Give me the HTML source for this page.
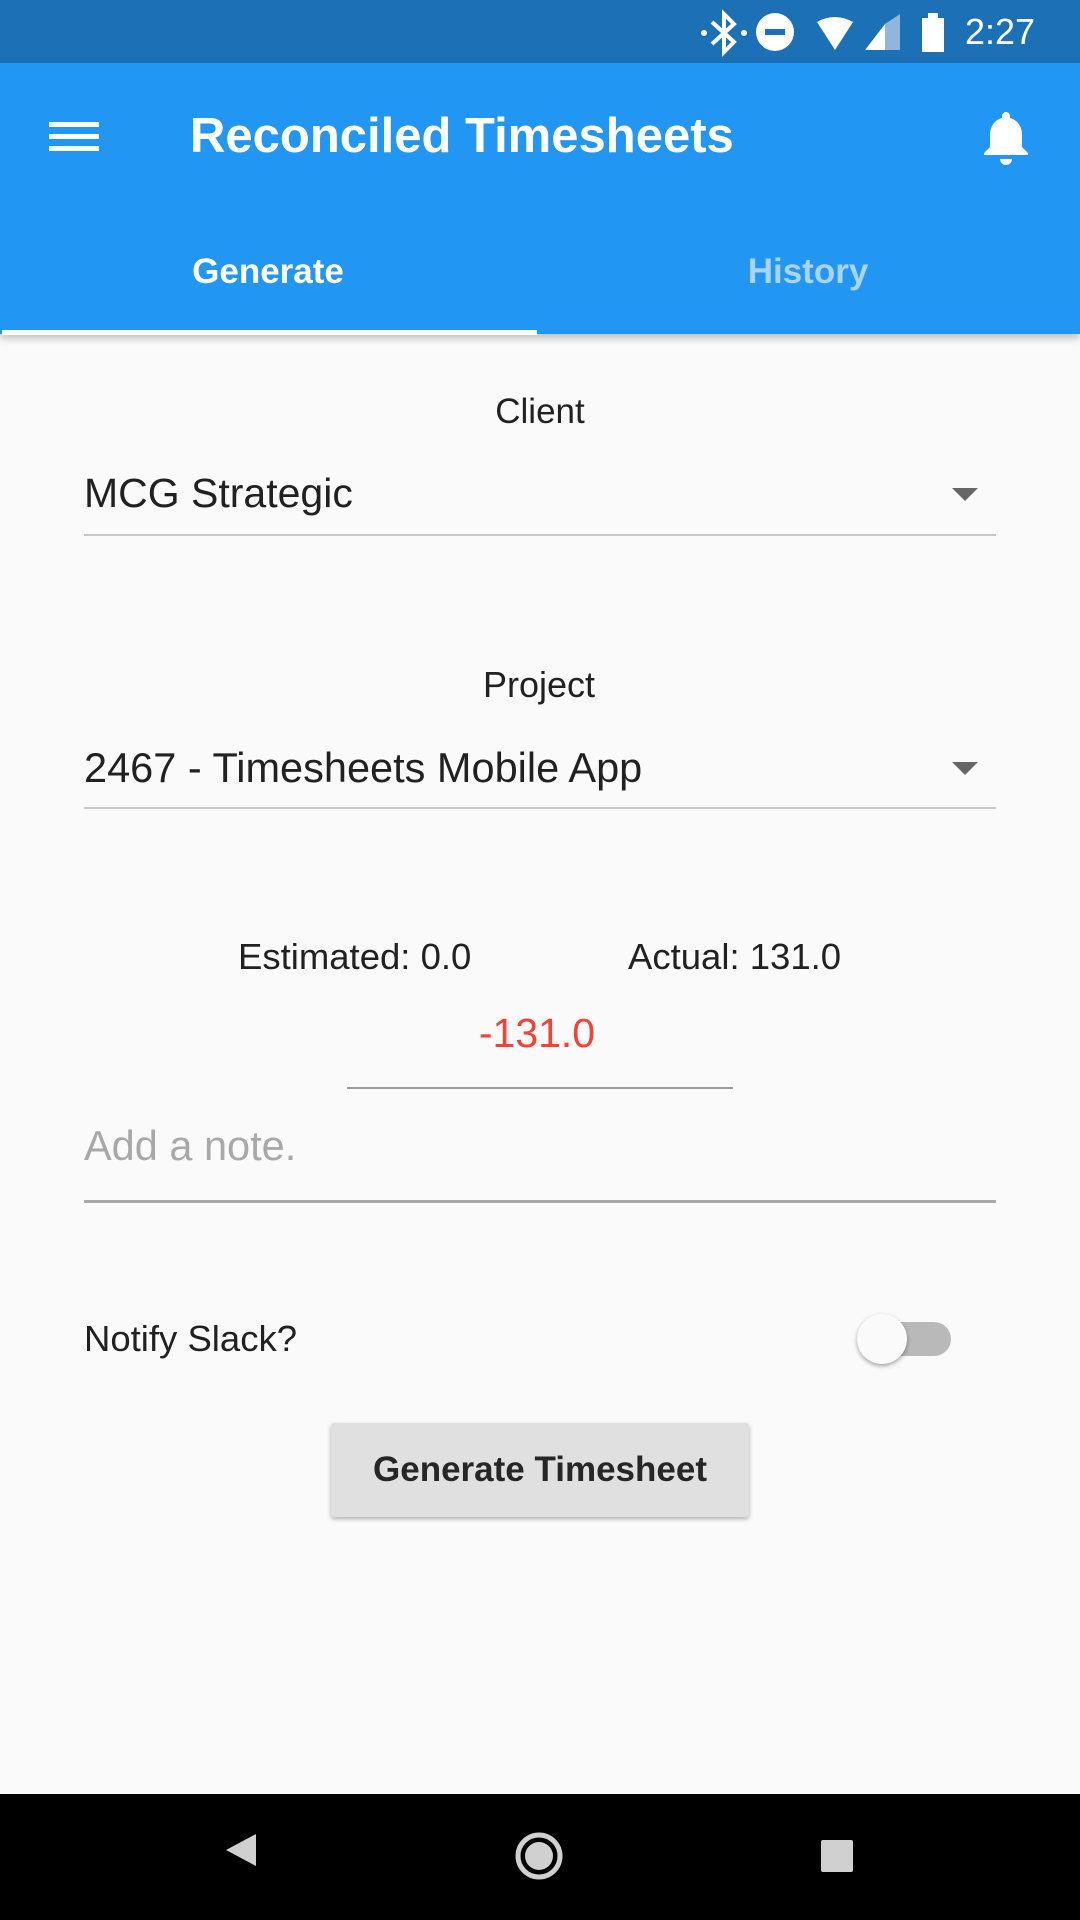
<!DOCTYPE html>
<html><head><meta charset="utf-8"><style>
body{margin:0;width:1080px;height:1920px;background:#fafafa;font-family:"Liberation Sans",sans-serif;position:relative;overflow:hidden;color:#212121}
.a{position:absolute}
.t{position:absolute;white-space:nowrap;line-height:1}
</style></head><body>
<div class="a" style="left:0;top:0;width:1080px;height:63px;background:#1b70b6"></div>
<div class="a" style="left:0;top:63px;width:1080px;height:271px;background:#2196f3;box-shadow:0 4px 8px rgba(0,0,0,0.25)"></div>
<svg class="a" style="left:700px;top:8px" width="380" height="50" viewBox="0 0 380 50">
<g fill="none" stroke="#fff" stroke-width="4"><path d="M12 14 L34 34 L24 44 L24 6 L34 16 L12 36"/></g>
<circle cx="4" cy="25" r="3" fill="#fff"/><circle cx="44" cy="25" r="3" fill="#fff"/>
<circle cx="75" cy="24" r="19" fill="#fff"/><rect x="65" y="21" width="20" height="6" fill="#1b70b6"/>
<path d="M117 14 Q135 4 153 14 L135 42 Z" fill="#fff"/>
<path d="M165 42 L185 16 L185 42 Z" fill="#fff"/><path d="M185 16 L200 6 L200 42 L185 42Z" fill="#8fb6dc"/>
<rect x="222" y="10" width="22" height="34" fill="#fff"/><rect x="228" y="5" width="10" height="6" fill="#fff"/>
</svg>
<div class="t" style="left:965px;top:14px;font-size:36px;color:#fff">2:27</div>
<div class="a" style="left:49px;top:122px;width:50px;height:5px;background:#fff"></div>
<div class="a" style="left:49px;top:134px;width:50px;height:5px;background:#fff"></div>
<div class="a" style="left:49px;top:146px;width:50px;height:5px;background:#fff"></div>
<div class="t" style="left:190px;top:112px;font-size:49px;font-weight:bold;color:#fff">Reconciled Timesheets</div>
<svg class="a" style="left:980px;top:110px" width="52" height="56" viewBox="0 0 52 56"><path d="M26 2 a4 4 0 0 1 4 4 v2 c8 2 12 9 12 17 v12 l6 6 v2 H4 v-2 l6-6 V25 c0-8 4-15 12-17 V6 a4 4 0 0 1 4-4z" fill="#fff"/><path d="M20 49 h12 a6 6 0 0 1 -12 0z" fill="#fff"/></svg>
<div class="t" style="left:0;width:536px;text-align:center;top:254px;font-size:35px;font-weight:bold;color:#fff">Generate</div>
<div class="t" style="left:540px;width:536px;text-align:center;top:254px;font-size:35px;font-weight:bold;color:#a9d3f8">History</div>
<div class="a" style="left:2px;top:330px;width:535px;height:5px;background:#fff"></div>
<div class="t" style="left:0;width:1080px;text-align:center;top:394px;font-size:35px">Client</div>
<div class="t" style="left:84px;top:473px;font-size:41px">MCG Strategic</div>
<div class="a" style="left:952px;top:488px;border-left:13px solid transparent;border-right:13px solid transparent;border-top:13px solid #666"></div>
<div class="a" style="left:84px;top:534px;width:912px;height:2px;background:#c8c8c8"></div>
<div class="t" style="left:0;width:1078px;text-align:center;top:667px;font-size:36px">Project</div>
<div class="t" style="left:84px;top:747px;font-size:41.5px">2467 - Timesheets Mobile App</div>
<div class="a" style="left:952px;top:762px;border-left:13px solid transparent;border-right:13px solid transparent;border-top:13px solid #666"></div>
<div class="a" style="left:84px;top:807px;width:912px;height:2px;background:#c8c8c8"></div>
<div class="t" style="left:238px;top:939px;font-size:36.5px">Estimated: 0.0</div>
<div class="t" style="left:628px;top:939px;font-size:36.5px">Actual: 131.0</div>
<div class="t" style="left:0;width:1074px;text-align:center;top:1013px;font-size:41px;color:#f44336">-131.0</div>
<div class="a" style="left:347px;top:1087px;width:386px;height:2px;background:#9e9e9e"></div>
<div class="t" style="left:84px;top:1125px;font-size:41.5px;color:#a8a8a8">Add a note.</div>
<div class="a" style="left:84px;top:1200px;width:912px;height:3px;background:#a8a8a8"></div>
<div class="t" style="left:84px;top:1321px;font-size:36.5px">Notify Slack?</div>
<div class="a" style="left:857px;top:1322px;width:94px;height:34px;border-radius:17px;background:#b9b9b9"></div>
<div class="a" style="left:857px;top:1314px;width:50px;height:50px;border-radius:25px;background:#fafafa;box-shadow:0 2px 4px rgba(0,0,0,0.35)"></div>
<div class="a" style="left:331px;top:1423px;width:418px;height:94px;background:#e0e0e0;border-radius:3px;box-shadow:0 2px 4px rgba(0,0,0,0.3)"></div>
<div class="t" style="left:331px;width:418px;text-align:center;top:1452px;font-size:35px;font-weight:bold;color:#262626">Generate Timesheet</div>
<div class="a" style="left:0;top:1794px;width:1080px;height:126px;background:#000"></div>
<svg class="a" style="left:0;top:1794px" width="1080" height="126"><path d="M256 40 L256 72 L226 56 Z" fill="#d0d0d0"/><circle cx="539" cy="62" r="21" fill="none" stroke="#d0d0d0" stroke-width="5"/><circle cx="539" cy="62" r="14" fill="#d0d0d0"/><rect x="821" y="46" width="32" height="32" rx="2" fill="#d0d0d0"/></svg>
</body></html>
